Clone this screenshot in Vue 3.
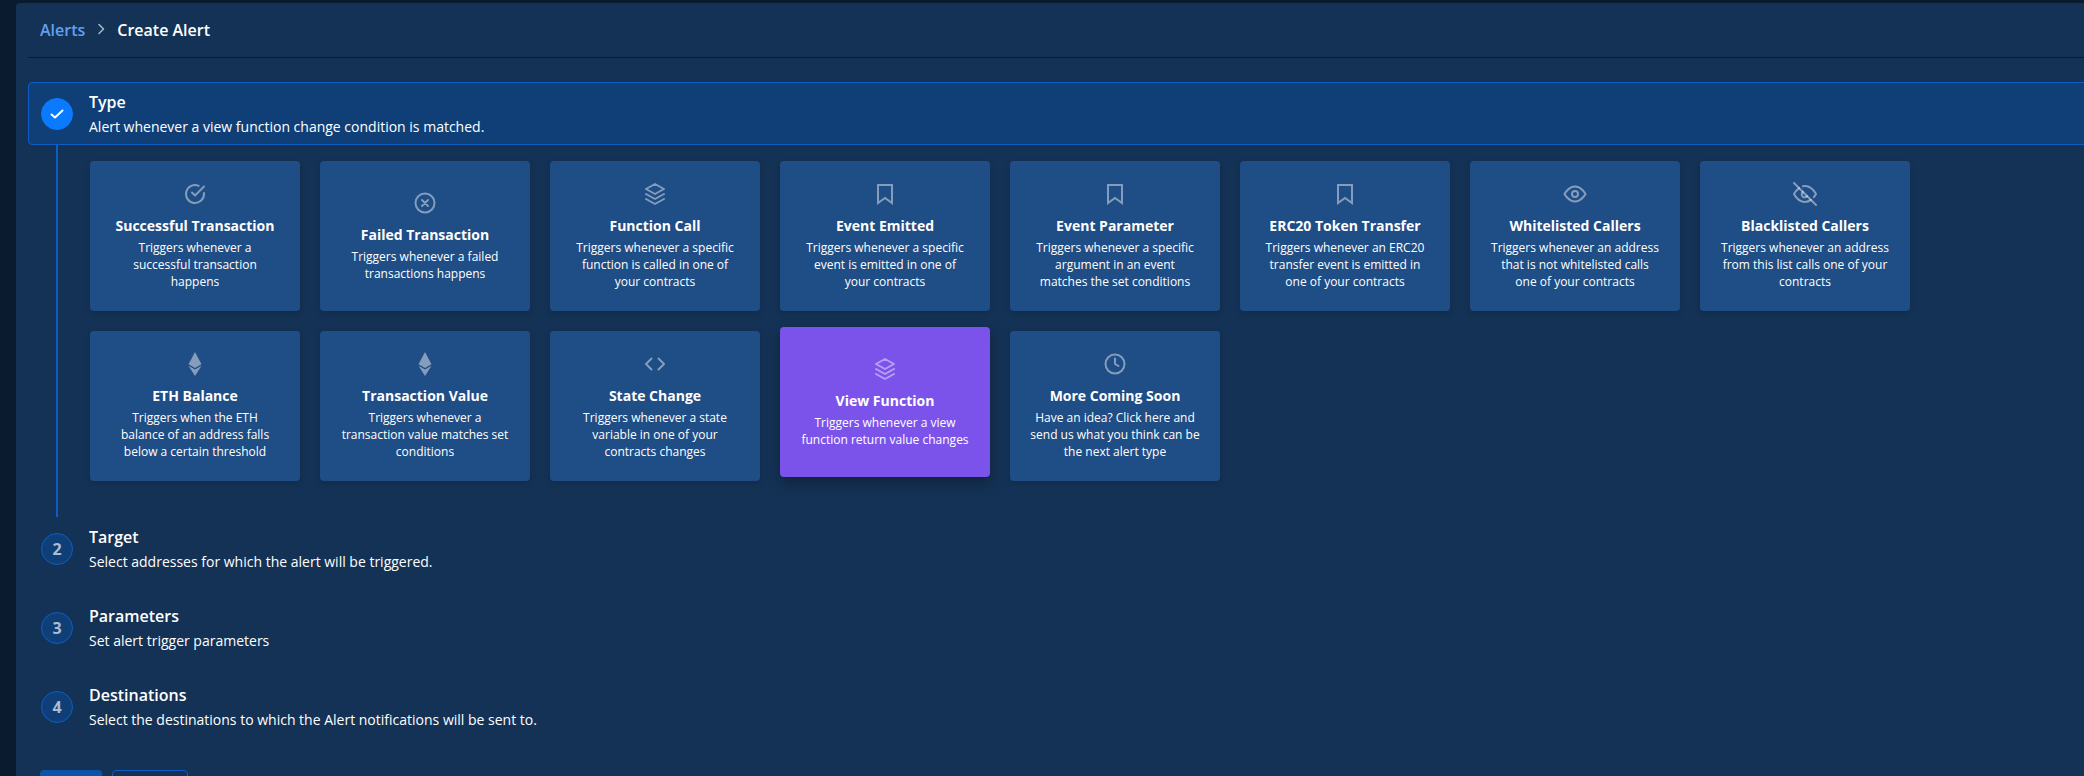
<script setup>
const cards = [
  { icon: 'check', title: 'Successful Transaction', text: 'Triggers whenever a successful transaction happens' },
  { icon: 'cross', title: 'Failed Transaction', text: 'Triggers whenever a failed transactions happens' },
  { icon: 'layers', title: 'Function Call', text: 'Triggers whenever a specific function is called in one of your contracts' },
  { icon: 'bookmark', title: 'Event Emitted', text: 'Triggers whenever a specific event is emitted in one of your contracts' },
  { icon: 'bookmark', title: 'Event Parameter', text: 'Triggers whenever a specific argument in an event matches the set conditions' },
  { icon: 'bookmark', title: 'ERC20 Token Transfer', text: 'Triggers whenever an ERC20 transfer event is emitted in one of your contracts' },
  { icon: 'eye', title: 'Whitelisted Callers', text: 'Triggers whenever an address that is not whitelisted calls one of your contracts' },
  { icon: 'eyeoff', title: 'Blacklisted Callers', text: 'Triggers whenever an address from this list calls one of your contracts' },
  { icon: 'eth', title: 'ETH Balance', text: 'Triggers when the ETH balance of an address falls below a certain threshold' },
  { icon: 'eth', title: 'Transaction Value', text: 'Triggers whenever a transaction value matches set conditions' },
  { icon: 'code', title: 'State Change', text: 'Triggers whenever a state variable in one of your contracts changes' },
  { icon: 'layers', title: 'View Function', text: 'Triggers whenever a view function return value changes', active: true },
  { icon: 'clock', title: 'More Coming Soon', text: 'Have an idea? Click here and send us what you think can be the next alert type' }
]

const steps = [
  { n: 2, title: 'Target', text: 'Select addresses for which the alert will be triggered.' },
  { n: 3, title: 'Parameters', text: 'Set alert trigger parameters' },
  { n: 4, title: 'Destinations', text: 'Select the destinations to which the Alert notifications will be sent to.' }
]
</script>

<template>
  <div class="page">
    <div class="panel">
      <div class="crumbs">
        <span class="crumb-link">Alerts</span>
        <svg class="crumb-sep" width="14" height="14" viewBox="0 0 14 14" fill="none" stroke="currentColor" stroke-width="1.5" stroke-linecap="round" stroke-linejoin="round"><path d="M5 2.5 9.5 7 5 11.5" /></svg>
        <span class="crumb-current">Create Alert</span>
      </div>

      <div class="steps">
        <div class="step-head current">
          <div class="bullet done">
            <svg width="14" height="14" viewBox="0 0 14 14" fill="none" stroke="#fff" stroke-width="2" stroke-linecap="round" stroke-linejoin="round"><path d="M1.500 7.500 5 10.500 12.500 3.500" /></svg>
          </div>
          <div class="step-copy">
            <div class="step-title">Type</div>
            <div class="step-text">Alert whenever a view function change condition is matched.</div>
          </div>
        </div>

        <div class="step-body">
          <div class="grid">
            <div v-for="card in cards" :key="card.title" class="card" :class="{ active: card.active }">
              <svg class="icon" width="24" height="24" viewBox="0 0 24 24" fill="none" stroke="currentColor" stroke-width="2" stroke-linecap="round" stroke-linejoin="round">
                <template v-if="card.icon === 'check'">
                  <path d="M21 11v1a9 9 0 1 1-5.300-8.200" />
                  <path d="M21 4.500 12 13.500l-3-3" />
                </template>
                <template v-else-if="card.icon === 'cross'">
                  <circle cx="12" cy="12" r="9.500" />
                  <path d="m9 9 6 6M15 9l-6 6" />
                </template>
                <template v-else-if="card.icon === 'layers'">
                  <path d="M12 2 3 7l9 5 9-5-9-5Z" />
                  <path d="m3 12 9 5 9-5" />
                  <path d="m3 17 9 5 9-5" />
                </template>
                <path v-else-if="card.icon === 'bookmark'" d="M5 3h14v18l-7-5-7 5V3Z" stroke-linecap="butt" stroke-linejoin="miter" />
                <template v-else-if="card.icon === 'eye'">
                  <path d="M1.500 12S5.500 4.500 12 4.500 22.500 12 22.500 12 18.500 19.500 12 19.500 1.500 12 1.500 12Z" />
                  <circle cx="12" cy="12" r="3" />
                </template>
                <template v-else-if="card.icon === 'eyeoff'">
                  <path d="M17.900 17.900A10.700 10.700 0 0 1 12 20C5 20 1 12 1 12a18.500 18.500 0 0 1 5.100-5.900" />
                  <path d="M9.900 4.200A9.100 9.100 0 0 1 12 4c7 0 11 8 11 8a18.500 18.500 0 0 1-2.200 3.200" />
                  <path d="M14.100 14.100a3 3 0 1 1-4.200-4.200" />
                  <path d="m1 1 22 22" />
                </template>
                <g v-else-if="card.icon === 'eth'" stroke="none" fill="currentColor">
                  <path d="M12 0 5.500 12.200 12 16l6.500-3.800L12 0Z" />
                  <path d="M5.500 13.800 12 24l6.500-10.200L12 17.600 5.500 13.800Z" />
                </g>
                <path v-else-if="card.icon === 'code'" d="M8.500 6.500 3 12l5.500 5.500M15.500 6.500 21 12l-5.500 5.500" />
                <template v-else-if="card.icon === 'clock'">
                  <circle cx="12" cy="12" r="9.500" />
                  <path d="M12 6.500V12l3.500 2" />
                </template>
              </svg>
              <div class="card-title">{{ card.title }}</div>
              <div class="card-text">{{ card.text }}</div>
            </div>
          </div>
        </div>

        <div v-for="step in steps" :key="step.n" class="step-head">
          <div class="bullet">{{ step.n }}</div>
          <div class="step-copy">
            <div class="step-title">{{ step.title }}</div>
            <div class="step-text">{{ step.text }}</div>
          </div>
        </div>
      </div>

      <div class="actions">
        <div class="btn primary"></div>
        <div class="btn outline"></div>
      </div>
    </div>
  </div>
</template>

<style>
html,
body {
  margin: 0;
  overflow: hidden;
  background: #0a1a2f;
}
</style>

<style scoped>
.page {
  width: 2084px;
  height: 776px;
  overflow: hidden;
  background: #0a1a2f;
  padding: 3px 0 0 16px;
  box-sizing: border-box;
  font-family: "Open Sans", "Noto Sans", sans-serif;
  color: #fff;
}

.panel {
  width: 2100px;
  height: 800px;
  background: #143255;
  border-radius: 4px 0 0 0;
}

.crumbs {
  display: flex;
  align-items: center;
  height: 54px;
  margin-left: 12px;
  padding-left: 12px;
  border-bottom: 1px solid #0a1a2f;
  font-size: 16px;
  font-weight: 600;
}

.crumb-link {
  color: #639ff2;
}

.crumb-sep {
  margin: 0 9px 2px 9px;
  color: #a9b9cc;
}

.crumb-current {
  color: #fff;
}

.steps {
  margin: 24px 0 0 12px;
}

.step-head {
  display: flex;
  align-items: center;
  gap: 16px;
  height: 63px;
  box-sizing: border-box;
  padding-left: 12px;
  border: 1px solid transparent;
  border-radius: 4px;
  margin-bottom: 16px;
}

.step-head:last-child {
  margin-bottom: 0;
}

.step-head.current {
  background: #103f78;
  border-color: #0a5ec4;
  margin-bottom: 0;
}

.step-copy {
  padding-top: 1px;
}

.bullet {
  width: 32px;
  height: 32px;
  flex: none;
  box-sizing: border-box;
  display: flex;
  align-items: center;
  justify-content: center;
  border: 1px solid #0a5ec4;
  border-radius: 50%;
  background: #103f78;
  color: #a9bdd3;
  font-size: 16px;
  font-weight: 700;
}

.bullet.done {
  background: #0a7aff;
  border-color: #0a7aff;
}

.step-title {
  font-size: 16px;
  font-weight: 600;
  line-height: 22px;
}

.step-text {
  font-size: 14px;
  line-height: 20px;
  margin-top: 4px;
}

.step-body {
  margin-left: 28px;
  border-left: 2px solid #0a5ec4;
  padding: 16px 0 36px 32px;
}

.grid {
  display: grid;
  grid-template-columns: repeat(8, 210px);
  grid-auto-rows: 150px;
  gap: 20px;
}

.card {
  display: flex;
  flex-direction: column;
  align-items: center;
  justify-content: center;
  box-sizing: border-box;
  padding: 0 20px;
  background: #1f4d85;
  border-radius: 4px;
  box-shadow: 0 2px 6px rgba(0, 0, 0, 0.15);
  text-align: center;
}

.card.active {
  background: #7c53ea;
  transform: translateY(-4px);
  box-shadow: 0 6px 14px rgba(0, 0, 0, 0.3);
}

.icon {
  color: rgba(255, 255, 255, 0.45);
  margin-bottom: 10px;
}

.card-title {
  font-size: 14px;
  font-weight: 700;
  line-height: 20px;
  margin-bottom: 3px;
}

.card-text {
  font-size: 12px;
  line-height: 17px;
}

.actions {
  display: flex;
  gap: 10px;
  margin: 32px 0 0 24px;
}

.btn {
  height: 40px;
  border-radius: 4px;
  box-sizing: border-box;
}

.btn.primary {
  width: 62px;
  background: #0b55a8;
}

.btn.outline {
  width: 76px;
  border: 1px solid #0a5ec4;
}
</style>
